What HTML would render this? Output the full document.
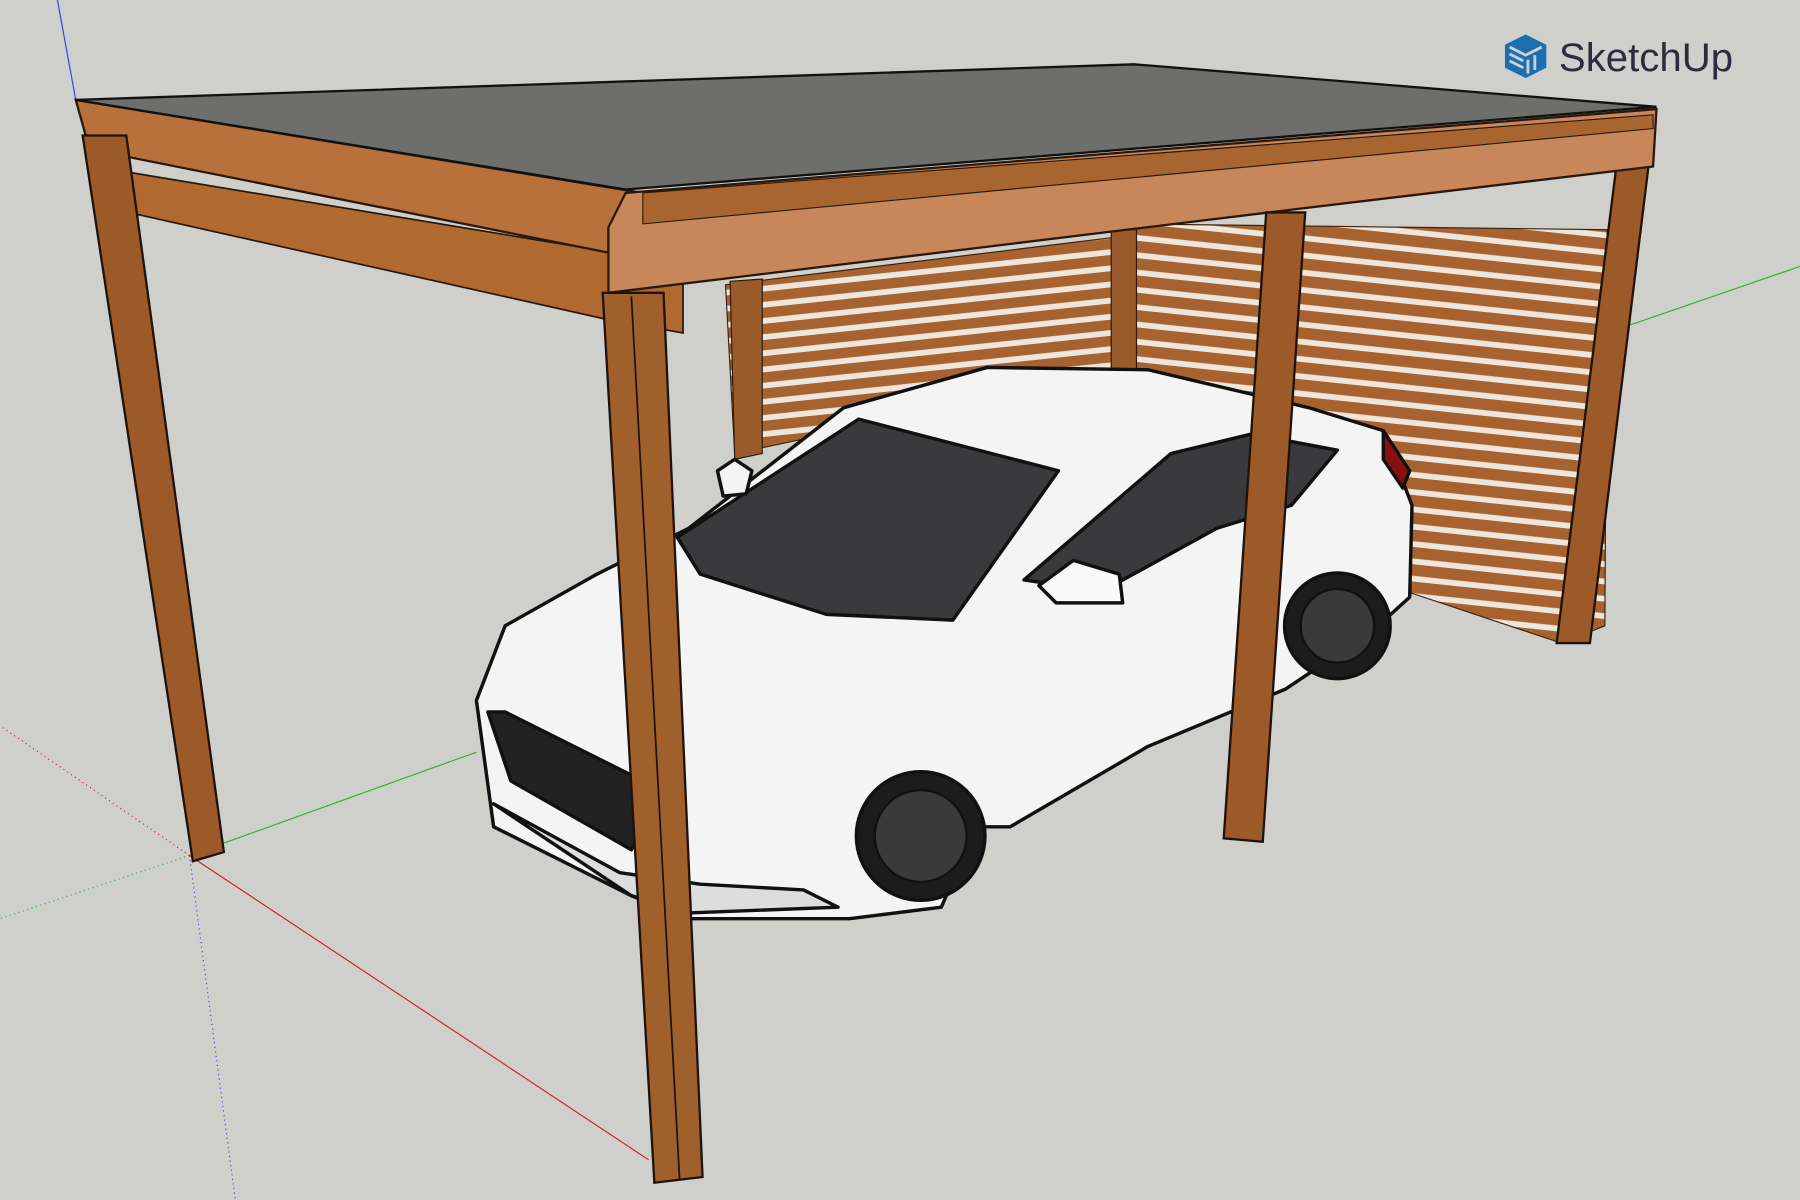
<!DOCTYPE html>
<html><head><style>
html,body{margin:0;padding:0;width:1800px;height:1200px;overflow:hidden;background:#cfcfcb}
svg{display:block}
</style></head><body>
<svg width="1800" height="1200" viewBox="0 0 1568 1045" preserveAspectRatio="none" xmlns="http://www.w3.org/2000/svg">
<defs>
<pattern id="sl" width="20" height="14" patternUnits="userSpaceOnUse" patternTransform="rotate(-6)">
<rect width="20" height="14" fill="#a8622e"/><rect y="9" width="20" height="5" fill="#ece6dc"/>
</pattern>
<pattern id="sl2" width="20" height="15" patternUnits="userSpaceOnUse" patternTransform="rotate(6)">
<rect width="20" height="15" fill="#a8622e"/><rect y="10" width="20" height="5" fill="#ece6dc"/>
</pattern>
</defs>
<rect width="1568" height="1045" fill="#cfcfcb"/>
<!-- axes -->
<line x1="50" y1="0" x2="66" y2="87" stroke="#3a3aff" stroke-width="1"/>
<line x1="165" y1="745" x2="205" y2="1045" stroke="#4444cc" stroke-width="1" stroke-dasharray="1 3"/>
<line x1="165" y1="745" x2="415" y2="655" stroke="#2fb52f" stroke-width="1"/>
<line x1="165" y1="745" x2="0" y2="800" stroke="#2fb52f" stroke-width="1" stroke-dasharray="1 3"/>
<line x1="1420" y1="283" x2="1568" y2="232" stroke="#2fb52f" stroke-width="1"/>
<line x1="165" y1="745" x2="565" y2="1010" stroke="#d02020" stroke-width="1"/>
<line x1="165" y1="745" x2="0" y2="632" stroke="#d02020" stroke-width="1" stroke-dasharray="1 3"/>
<!-- slat walls -->
<polygon points="632,248 985,205 985,322 640,395" fill="url(#sl)" stroke="#3a2010" stroke-width="1"/>
<polygon points="985,195 1400,200 1398,545 1360,560 1225,515 1225,430 985,400" fill="url(#sl2)" stroke="#3a2010" stroke-width="1"/>
<rect x="968" y="200" width="22" height="122" fill="#9a5a2a" stroke="#2a180c"/>
<polygon points="636,245 664,243 664,395 640,400" fill="#9a5a2a" stroke="#2a180c"/>
<!-- right post -->
<polygon points="1408,145 1436,145 1385,560 1356,560" fill="#9b5a28" stroke="#1e120a" stroke-width="2"/>
<!-- lower left rail -->
<polygon points="112,150 595,230 595,290 528,278 112,185" fill="#b06a30" stroke="#2a180c" stroke-width="1.5"/>
<!-- roof fascia left -->
<polygon points="66,87 560,168 560,200 530,200 530,220 78,130" fill="#b8713a" stroke="#2a180c" stroke-width="2"/>
<!-- front beam -->
<polygon points="545,168 1443,95 1440,145 1130,182 530,255 530,198" fill="#c8875a" stroke="#2a180c" stroke-width="2"/>
<polygon points="560,168 1440,100 1440,112 560,195" fill="#a9652f" stroke="#2a180c" stroke-width="1"/>
<!-- roof top -->
<polygon points="66,87 988,56 1443,93 545,165" fill="#6e6e6c" stroke="#111" stroke-width="2"/>
<!-- left post -->
<polygon points="72,118 110,118 195,742 168,750" fill="#9b5a28" stroke="#1e120a" stroke-width="2"/>
<!-- car -->
<g stroke="#111" stroke-width="3" stroke-linejoin="round">
<path d="M415,610 L440,545 L520,500 L600,460 L735,355 L860,320 L1000,322 L1140,355 L1205,375 L1230,440 L1228,520 L1195,550 L1120,600 L1000,650 L880,720 L850,720 L820,790 L740,800 L600,800 L550,780 L430,720 Z" fill="#f4f4f4"/>
<path d="M590,468 L748,365 L922,410 L830,540 L720,535 L610,500 Z" fill="#3a3a3c"/>
<path d="M892,505 L1020,395 L1090,378 L1165,392 L1125,440 L1060,460 L960,515 Z" fill="#3a3a3c"/>
<path d="M905,510 L935,488 L975,500 L978,525 L920,525 Z" fill="#fafafa"/>
<path d="M425,620 L445,680 L550,740 L560,720 L560,680 L440,620 Z" fill="#222"/>
<path d="M430,700 L540,760 L610,770 L700,775 L730,790 L600,795 L550,780 Z" fill="#ddd"/>
<circle cx="802" cy="728" r="56" fill="#1c1c1c"/>
<circle cx="802" cy="728" r="40" fill="#3a3a3a" stroke-width="2"/>
<circle cx="1165" cy="545" r="46" fill="#1c1c1c"/>
<circle cx="1165" cy="545" r="32" fill="#3a3a3a" stroke-width="2"/>
<path d="M1205,375 L1228,410 L1222,425 L1205,400 Z" fill="#8a1010"/>
<path d="M625,410 L640,400 L655,410 L650,430 L630,432 Z" fill="#f4f4f4"/>
</g>
<!-- middle post -->
<polygon points="1103,185 1137,185 1100,733 1066,730" fill="#9b5a28" stroke="#1e120a" stroke-width="2"/>
<!-- front post -->
<polygon points="525,255 578,255 612,1025 570,1030" fill="#a0602c" stroke="#1e120a" stroke-width="2"/>
<line x1="550" y1="258" x2="592" y2="1027" stroke="#1e120a" stroke-width="1.5"/>
<!-- logo -->
<g transform="translate(1311,30)">
<path d="M18,0 L36,9 L36,29 L18,38 L0,29 L0,9 Z" fill="#1a6fb0"/>
<path d="M4,11 L18,18 L32,11 M4,17 L16,23 M4,23 L16,29 M20,22 L20,34 M26,18 L26,31" stroke="#cfcfcb" stroke-width="2.5" fill="none"/>
</g>
<text x="1358" y="62" font-family="Liberation Sans, sans-serif" font-size="35" fill="#2d2b3d">SketchUp</text>
</svg>
</body></html>
